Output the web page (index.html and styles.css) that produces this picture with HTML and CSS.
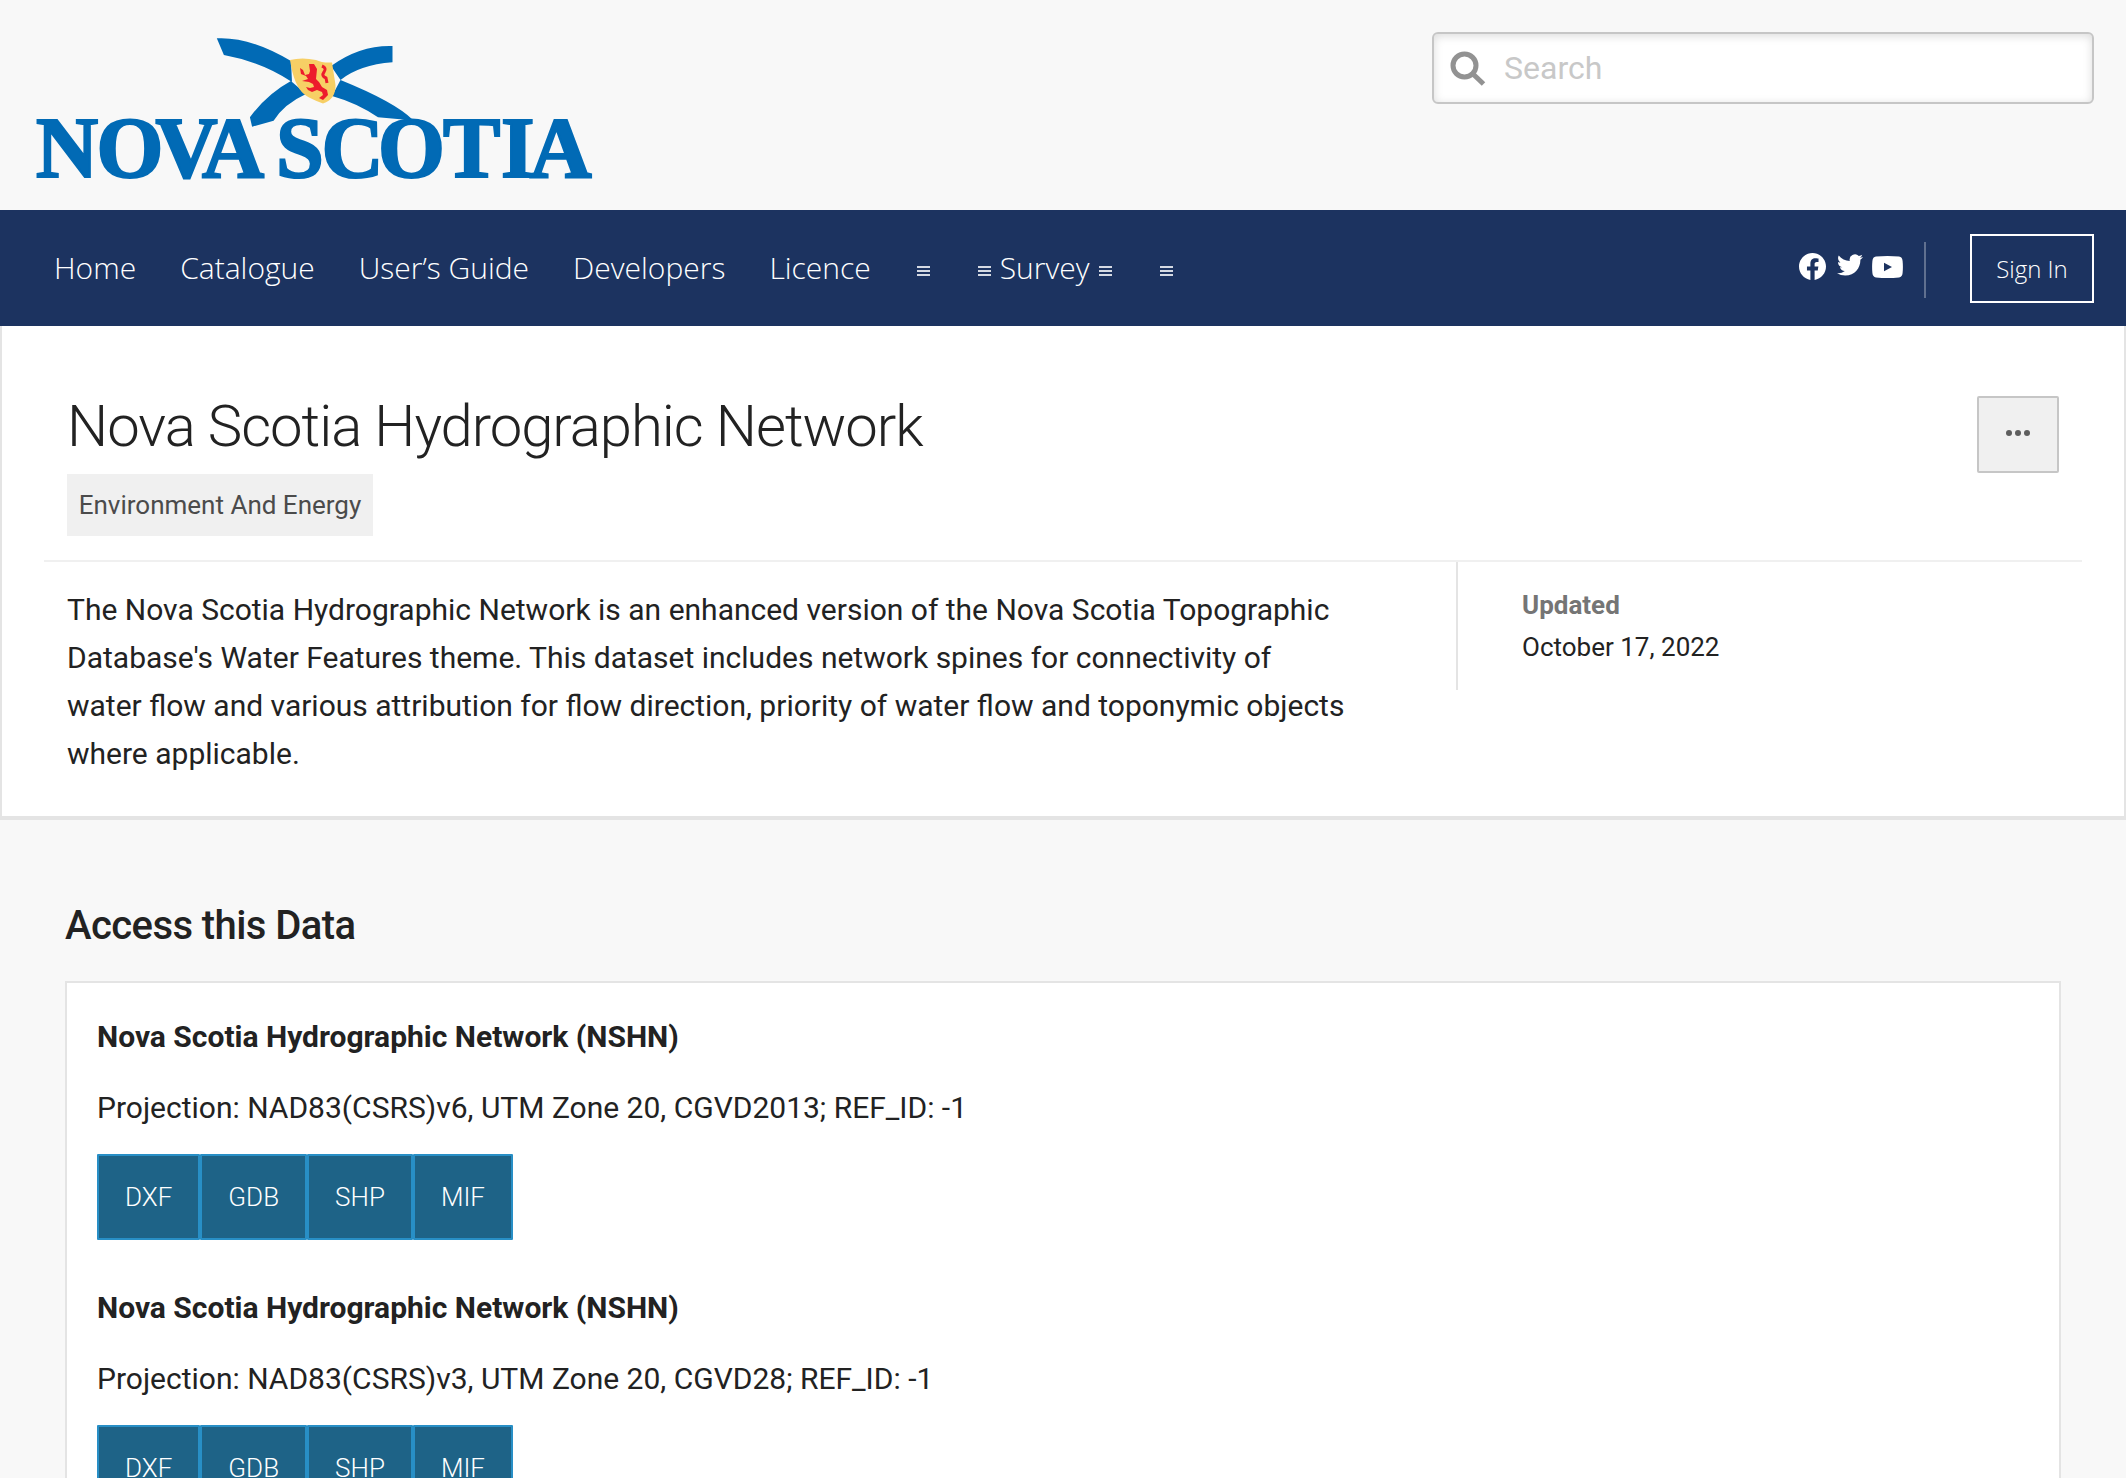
FILE: index.html
```html
<!DOCTYPE html>
<html lang="en">
<head>
<meta charset="utf-8">
<title>Nova Scotia Hydrographic Network</title>
<link rel="stylesheet" href="styles.css">
</head>
<body>
<header class="masthead">
  <svg class="logo" viewBox="36 36 560 150" role="img" aria-label="Nova Scotia">
    <g fill="#016ab5">
      <path d="M216.8 38.3Q250 36.5 291 61L292 82Q262 62 223.9 55Z"/>
      <path d="M392.5 46V62.3Q359 65 340.5 80L331 66Q360 45 392.5 46Z"/>
      <path d="M290.9 81Q267 94 249.9 117.3L252.1 126.7L273.6 120.7Q284 104 306 94Z"/>
      <path d="M340.5 80Q395 102 413 120L403 119.5L378 117.3Q357 103 332 96Z"/>
    </g>
    <path d="M290 60Q302 57 316 60Q322 63 332 62.5L335.500 85Q336 99 323 103.500Q308 98 304 94Q294 86 290 60Z" fill="#f7cf65"/>
    <path class="lion" d="M309 64h5l3 5-1 10 3 3 3 5 5 3 1 5-5 5-4-2 4-3-1-3-5-2-5 2-4-2-2-3 4 1 4-1-1-3-4-2-7-1 6-2-2-3-5-2-1-6 3 2 2 5 4-1 1-3z"/>
    <path d="M322 66q5 2 2 6t2 6l1 5" fill="none" stroke="#ed1b2c" stroke-width="3"/>
    <text class="wordmark" y="177" x="36 96.500 155.500 202 276 321.500 378 443 501 529.500">NOVASCOTIA</text>
  </svg>
  <div class="search">
    <svg class="search-icon" viewBox="0 0 36 36"><circle cx="14.500" cy="15.500" r="11.500"/><path d="M22.500 23.500L33.500 34"/></svg>
    <span>Search</span>
  </div>
</header>
<nav class="nav">
  <div class="links">
    <a>Home</a><a>Catalogue</a><a>User’s Guide</a><a>Developers</a><a>Licence</a>
    <a><i class="bars"></i></a>
    <a class="survey"><i class="bars"></i>Survey<i class="bars"></i></a>
    <a><i class="bars"></i></a>
  </div>
  <div class="social">
    <svg class="fb" viewBox="0 0 24 24"><path d="M24 12.073C24 5.446 18.627.073 12 .073S0 5.446 0 12.073c0 5.990 4.388 10.954 10.125 11.854v-8.385H7.078v-3.470h3.047V9.430c0-3.007 1.792-4.669 4.533-4.669 1.312 0 2.686.235 2.686.235v2.953H15.830c-1.491 0-1.956.925-1.956 1.874v2.250h3.328l-.532 3.470h-2.796v8.385C19.612 23.027 24 18.062 24 12.073z"/></svg>
    <svg class="tw" viewBox="0 2.200 24 19.600"><path d="M23.953 4.570a10 10 0 01-2.825.775 4.958 4.958 0 002.163-2.723c-.951.555-2.005.959-3.127 1.184a4.920 4.920 0 00-8.384 4.482C7.690 8.095 4.067 6.130 1.640 3.162a4.822 4.822 0 00-.666 2.475c0 1.710.870 3.213 2.188 4.096a4.904 4.904 0 01-2.228-.616v.060a4.923 4.923 0 003.946 4.827 4.996 4.996 0 01-2.212.085 4.936 4.936 0 004.604 3.417 9.867 9.867 0 01-6.102 2.105c-.390 0-.779-.023-1.170-.067a13.995 13.995 0 007.557 2.209c9.053 0 13.998-7.496 13.998-13.985 0-.210 0-.420-.015-.630A9.935 9.935 0 0024 4.590z"/></svg>
    <svg class="yt" viewBox="0 0 31 22"><path fill-rule="evenodd" d="M4 .600Q15.500-.500 27 .600Q30.300 1 30.600 5Q31.200 11 30.600 17Q30.300 21 27 21.400Q15.500 22.500 4 21.400Q.700 21 .400 17Q-.200 11 .400 5Q.700 1 4 .600ZM12 6.800V15.200L20 11Z"/></svg>
  </div>
  <div class="divider"></div>
  <a class="signin">Sign In</a>
</nav>
<main>
  <section class="summary">
    <div class="title-row">
      <div>
        <h1>Nova Scotia Hydrographic Network</h1>
        <span class="tag">Environment And Energy</span>
      </div>
      <button class="more" aria-label="More"><i></i><i></i><i></i></button>
    </div>
    <div class="details">
      <p>The Nova Scotia Hydrographic Network is an enhanced version of the Nova Scotia Topographic Database's Water Features theme. This dataset includes network spines for connectivity of water flow and various attribution for flow direction, priority of water flow and toponymic objects where applicable.</p>
      <dl><dt>Updated</dt><dd>October 17, 2022</dd></dl>
    </div>
  </section>
  <section class="access">
    <h2>Access this Data</h2>
    <div class="card">
      <article>
        <h3>Nova Scotia Hydrographic Network (NSHN)</h3>
        <p>Projection: NAD83(CSRS)v6, UTM Zone 20, CGVD2013; REF_ID: -1</p>
        <div class="formats"><a>DXF</a><a>GDB</a><a>SHP</a><a>MIF</a></div>
      </article>
      <article>
        <h3>Nova Scotia Hydrographic Network (NSHN)</h3>
        <p>Projection: NAD83(CSRS)v3, UTM Zone 20, CGVD28; REF_ID: -1</p>
        <div class="formats"><a>DXF</a><a>GDB</a><a>SHP</a><a>MIF</a></div>
      </article>
    </div>
  </section>
</main>
</body>
</html>
```
FILE: styles.css
```css
* { box-sizing: border-box; }
html, body { height: 100%; overflow: hidden; }
body {
  margin: 0;
  background: #f8f8f8;
  color: #222;
  font-family: Roboto, "Liberation Sans", sans-serif;
  display: flex;
  flex-direction: column;
}
h1, h2, h3, p, dl, dd { margin: 0; }

.masthead {
  flex: none;
  height: 210px;
  padding: 32px 32px 0 36px;
  display: flex;
  justify-content: space-between;
  align-items: flex-start;
}
.logo { width: 560px; height: 150px; margin-top: 4px; overflow: visible; }
.wordmark {
  font: bold 86px "Liberation Serif", serif;
  fill: #016ab5;
  stroke: #016ab5;
  stroke-width: 2.2px;
}
.lion { fill: #ed1b2c; }
.search {
  width: 662px;
  height: 72px;
  padding-left: 16px;
  display: flex;
  align-items: center;
  gap: 18px;
  border: 2px solid #c6c6c6;
  border-radius: 6px;
  background: #fff;
  box-shadow: inset 0 2px 10px rgba(0, 0, 0, .14);
  color: #c8c8c8;
  font-size: 32px;
}
.search-icon { width: 36px; height: 36px; fill: none; stroke: #929292; stroke-width: 5px; }

.nav {
  flex: none;
  height: 116px;
  padding: 0 32px 0 54px;
  display: flex;
  align-items: center;
  background: #1c3360;
  color: #fff;
  font-family: "Open Sans", sans-serif;
  font-weight: 300;
}
.links { display: flex; align-items: center; gap: 44px; font-size: 30px; flex: 1; margin-top: -2px; }
.links a { display: flex; align-items: center; white-space: nowrap; }
.survey { gap: 7px; }
.bars {
  width: 13px;
  height: 10px;
  margin: 8px 2px 0;
  border: solid #d5dae3;
  border-width: 2px 0;
  background: linear-gradient(#d5dae3, #d5dae3) 0 50% / 100% 2px no-repeat;
}
.social { display: flex; align-items: flex-start; height: 28px; margin-top: -3px; fill: #fff; }
.fb { width: 27px; height: 27px; }
.tw { width: 26px; height: 22px; margin: 1px 9px 0 11px; }
.yt { width: 31px; height: 22px; margin-top: 3px; }
.divider { width: 2px; height: 56px; margin: 4px 44px 0 21px; background: #60708f; }
.signin {
  width: 124px;
  height: 69px;
  border: 2px solid #fff;
  font-size: 24px;
  line-height: 66px;
  text-align: center;
}

.summary {
  height: 494px;
  padding: 70px 42px 0;
  border: solid #e4e4e4;
  border-width: 0 2px 4px;
  background: #fff;
}
.title-row {
  height: 166px;
  padding: 0 23px;
  display: flex;
  justify-content: space-between;
  align-items: flex-start;
  border-bottom: 2px solid #f0f0f0;
}
h1 { font-size: 58px; font-weight: 300; line-height: 60px; letter-spacing: -1.03px; }
.tag {
  display: block;
  width: 306px;
  height: 62px;
  margin-top: 18px;
  line-height: 62px;
  text-align: center;
  background: #f0f0f0;
  color: #4b4b4b;
  font-size: 26px;
}
.more {
  width: 82px;
  height: 77px;
  padding: 0 0 3px;
  display: flex;
  align-items: center;
  justify-content: center;
  gap: 3px;
  border: 2px solid #c6c6c6;
  border-radius: 2px;
  background: #f0f0f0;
}
.more i { width: 6px; height: 6px; border-radius: 50%; background: #5e5e5e; }
.details { display: flex; align-items: flex-start; padding-left: 23px; }
.details p { width: 1389px; padding: 24px 108px 0 0; font-size: 30px; line-height: 48px; }
dl {
  height: 128px;
  padding: 22px 0 0 64px;
  border-left: 2px solid #e4e4e4;
  font-size: 26px;
  line-height: 42px;
}
dt { color: #757575; font-weight: 700; }

.access { padding: 80px 65px 0; }
h2 { font-size: 40px; font-weight: 500; line-height: 52px; letter-spacing: -.57px; }
.card { margin-top: 29px; padding: 30px; border: 2px solid #e4e4e4; background: #fff; height: 600px; }
article { height: 271px; }
h3 { font-size: 30px; line-height: 48px; font-weight: 700; }
article p { margin-top: 23px; font-size: 30px; line-height: 48px; }
.formats { display: flex; margin-top: 22px; }
.formats a {
  height: 86px;
  padding: 0 26px;
  border: 2px solid #288fc6;
  border-radius: 1px;
  background: #1e6387;
  color: #fff;
  font-size: 26px;
  font-weight: 300;
  line-height: 83px;
}
```
